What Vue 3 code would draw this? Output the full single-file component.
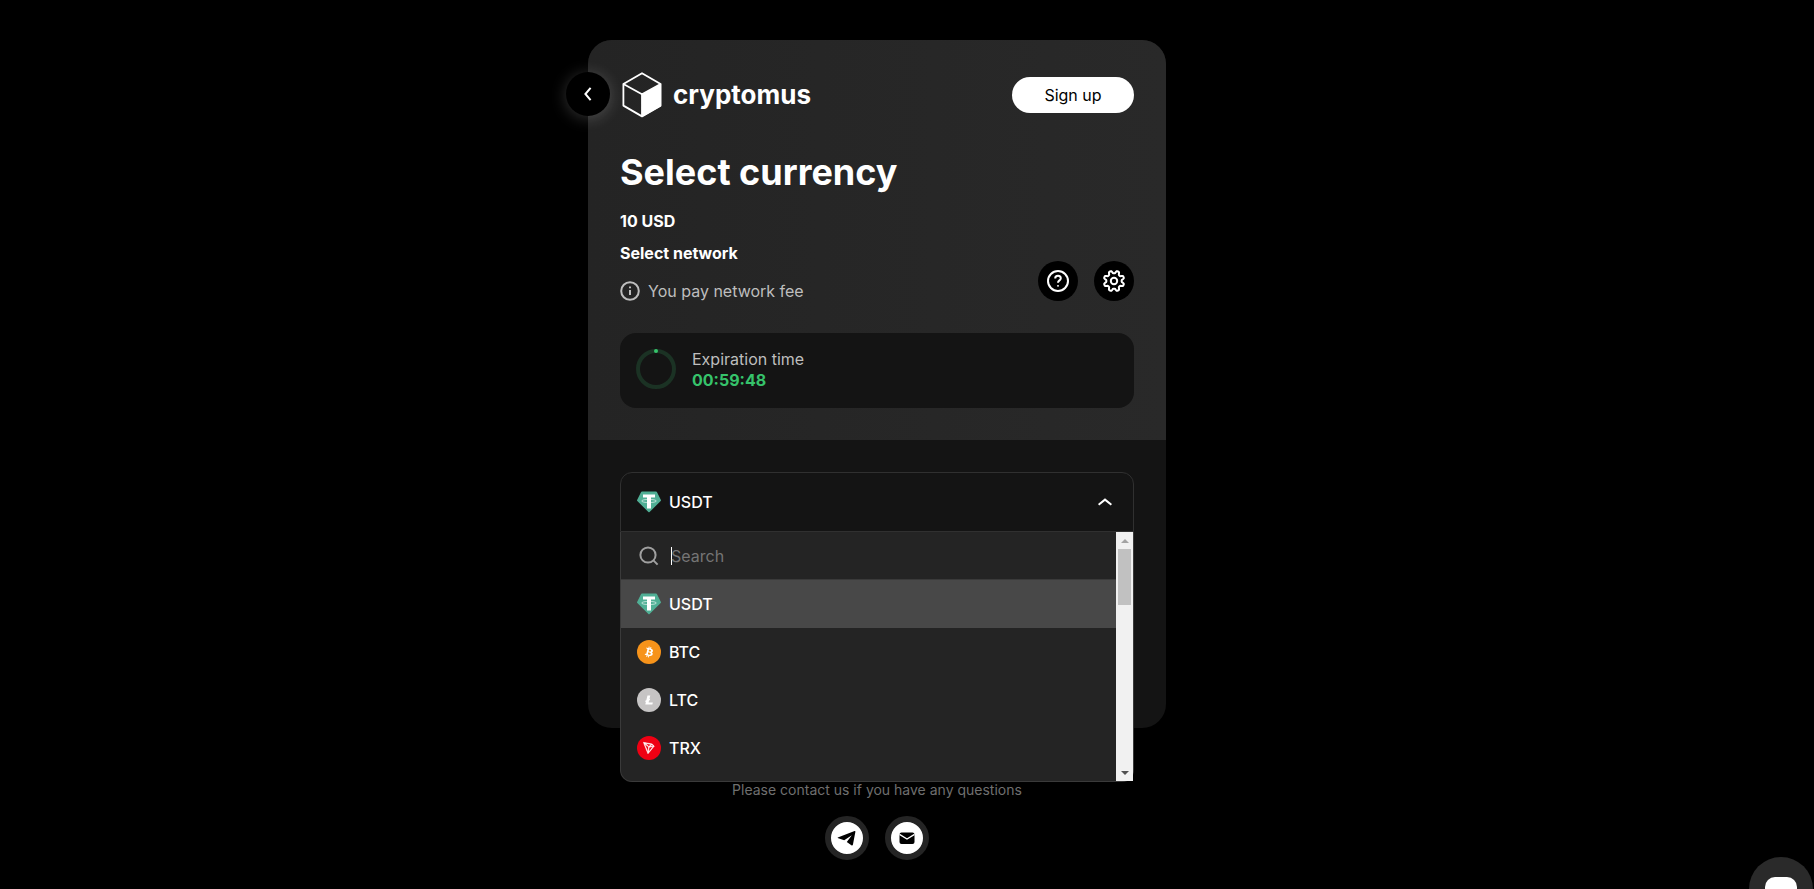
<template>
  <div class="page">
    <main class="checkout">
      <div class="card">
        <button class="back" type="button" aria-label="Back">
          <svg width="8" height="14" viewBox="0 0 8 14">
            <path d="M6.6 0.8 1.4 7l5.2 6.2" />
          </svg>
        </button>

        <section class="summary">
          <header class="header">
            <a class="logo" href="#">
              <svg width="40" height="46" viewBox="0 0 40 46">
                <path
                  class="logo-line"
                  d="M20 1.2 38.6 12v21.6L20 44.4 1.4 33.6V12zM1.4 12 20 22.2 38.6 12M20 22.2v22"
                />
                <path class="logo-face" d="M20 22.2 39 11.8v22.4L20 45z" />
              </svg>
              <span class="logo-name">cryptomus</span>
            </a>
            <button class="sign-up" type="button">Sign up</button>
          </header>

          <h1 class="title">Select currency</h1>

          <div class="details">
            <div class="info">
              <p class="amount">{{ amount }}</p>
              <p class="network">Select network</p>
              <p class="fee">
                <svg width="20" height="20" viewBox="0 0 20 20">
                  <circle cx="10" cy="10" r="8.8" />
                  <path d="M10 9v5" />
                  <path d="M10 5.6v1.6" />
                </svg>
                You pay network fee
              </p>
            </div>
            <div class="actions">
              <button class="round" type="button" aria-label="Help">
                <svg width="24" height="24" viewBox="0 0 24 24">
                  <circle cx="12" cy="12" r="10" />
                  <path d="M9.2 9.4c0-1.7 1.2-2.7 2.8-2.7s2.8 1 2.8 2.5c0 2.2-2.8 2.2-2.8 4.6" />
                  <path d="M12 16.2v1.4" />
                </svg>
              </button>
              <button class="round" type="button" aria-label="Settings">
                <svg width="24" height="24" viewBox="0 0 24 24">
                  <path :d="gearPath" />
                  <circle cx="12" cy="12" r="3.2" />
                </svg>
              </button>
            </div>
          </div>

          <div class="timer">
            <svg width="40" height="40" viewBox="0 0 40 40">
              <circle class="ring" cx="20" cy="20" r="18" />
              <circle class="ring-dot" cx="20" cy="2" r="2" />
            </svg>
            <div>
              <p class="timer-label">Expiration time</p>
              <p class="timer-value">{{ timeLeft }}</p>
            </div>
          </div>
        </section>

        <section class="payment">
          <div class="dropdown">
            <button
              class="dropdown-toggle"
              type="button"
              aria-haspopup="listbox"
              :aria-expanded="isOpen"
              @click="isOpen = !isOpen"
            >
              <CoinIcon :name="selected" />
              <span>{{ selected }}</span>
              <svg class="chevron" :class="{ closed: !isOpen }" width="14" height="8" viewBox="0 0 14 8">
                <path d="M.6 6.8 7 1.6l6.4 5.2" />
              </svg>
            </button>

            <div v-if="isOpen" class="menu">
              <div class="menu-list">
                <label class="search">
                  <svg width="20" height="20" viewBox="0 0 20 20">
                    <circle cx="9" cy="9" r="7.6" />
                    <path d="m14.4 14.4 4.2 4.2" />
                  </svg>
                  <span class="caret"></span>
                  <input v-model="query" type="text" placeholder="Search" aria-label="Search" />
                </label>
                <ul role="listbox" aria-label="Currency">
                  <li
                    v-for="coin in filteredCoins"
                    :key="coin"
                    class="option"
                    :class="{ active: coin === selected }"
                    role="option"
                    :aria-selected="coin === selected"
                    @click="selectCoin(coin)"
                  >
                    <CoinIcon :name="coin" />
                    <span>{{ coin }}</span>
                  </li>
                </ul>
              </div>
              <div class="scrollbar">
                <span class="arrow up"></span>
                <span class="thumb"></span>
                <span class="arrow down"></span>
              </div>
            </div>
          </div>
        </section>
      </div>

      <footer class="footer">
        <p>Please contact us if you have any questions</p>
        <div class="socials">
          <a class="social" href="#" aria-label="Telegram">
            <svg width="20" height="20" viewBox="0 0 20 20">
              <path d="M.8 9.6 17.6 3c.5-.2.9.1.8.7l-2.5 13c-.2.8-.8 1-1.5.6l-4.6-3.4 5-6.6-7.6 5-5.9-2c-.8-.2-.8-.5-.5-.7z" />
            </svg>
          </a>
          <a class="social" href="#" aria-label="E-mail">
            <svg width="20" height="20" viewBox="0 0 20 20">
              <rect x="2.5" y="4.5" width="15" height="11.5" rx="2" />
              <path class="cut" d="m2.5 6.4 7.5 4.6 7.5-4.6" />
            </svg>
          </a>
        </div>
      </footer>
    </main>

    <button class="chat" type="button" aria-label="Open chat">
      <svg width="32" height="28" viewBox="0 0 32 28">
        <rect width="32" height="26" rx="10" />
      </svg>
    </button>
  </div>
</template>

<script setup>
import { ref, computed, h } from "vue";

const amount = ref("10 USD");
const timeLeft = ref("00:59:48");
const coins = ["USDT", "BTC", "LTC", "TRX"];
const selected = ref("USDT");
const query = ref("");
const isOpen = ref(true);

const filteredCoins = computed(() =>
  coins.filter((coin) => coin.toLowerCase().includes(query.value.toLowerCase()))
);

const selectCoin = (coin) => {
  selected.value = coin;
  isOpen.value = false;
};

// Eight soft teeth around the centre of a 24px box
const gearPath = computed(() => {
  const points = [];
  for (let i = 0; i < 96; i++) {
    const angle = (i / 96) * Math.PI * 2;
    const wave = Math.tanh(2 * Math.cos(8 * angle + Math.PI));
    const radius = 9 + 1.4 * wave;
    const x = 12 + radius * Math.cos(angle);
    const y = 12 + radius * Math.sin(angle);
    points.push(`${x.toFixed(2)} ${y.toFixed(2)}`);
  }
  return `M${points.join("L")}z`;
});

const coinShapes = {
  USDT: () => [
    h("path", { fill: "#50af95", d: "M5 1.5h14a1 1 0 0 1 .9.5l4 8c.2.4.1.8-.2 1.1L12.6 22a.9.9 0 0 1-1.2 0L.3 11.1c-.3-.3-.4-.7-.2-1.1l4-8a1 1 0 0 1 .9-.5z" }),
    h("path", { fill: "#fff", d: "M6 4.5h12v3h-4v11h-4v-11H6z" }),
    h("ellipse", { cx: 12, cy: 11, rx: 7.4, ry: 1.6, fill: "none", stroke: "#fff", "stroke-width": 0.6 }),
  ],
  BTC: () => [
    h("circle", { cx: 12, cy: 12, r: 12, fill: "#f7931a" }),
    h("path", {
      fill: "#fff",
      transform: "translate(3.2 3.2) scale(.55)",
      d: "M23.189 14.02c.314-2.096-1.283-3.223-3.465-3.975l.708-2.84-1.728-.43-.69 2.765c-.454-.114-.92-.22-1.385-.326l.695-2.783L15.596 6l-.708 2.839c-.376-.086-.746-.17-1.104-.26l.002-.009-2.384-.595-.46 1.846s1.283.294 1.256.312c.7.175.826.638.805 1.006l-.806 3.235c.048.012.11.03.18.057l-.183-.045-1.13 4.532c-.086.212-.303.531-.793.41.018.025-1.256-.313-1.256-.313l-.858 1.978 2.25.561c.418.105.828.215 1.231.318l-.715 2.872 1.727.43.708-2.84c.472.127.93.245 1.378.357l-.706 2.828 1.728.43.715-2.866c2.948.558 5.164.333 6.097-2.333.752-2.146-.037-3.385-1.588-4.192 1.13-.26 1.98-1.003 2.207-2.538zm-3.95 5.538c-.533 2.147-4.148.986-5.32.695l.95-3.805c1.172.293 4.929.872 4.37 3.11zm.535-5.569c-.487 1.953-3.495.96-4.47.717l.86-3.45c.975.243 4.118.696 3.61 2.733z",
    }),
  ],
  LTC: () => [
    h("circle", { cx: 12, cy: 12, r: 12, fill: "#c6c4c4" }),
    h("path", {
      fill: "#fff",
      transform: "translate(3.2 3.2) scale(.55)",
      d: "M10.427 19.214 9 19.768l.688-2.759 1.444-.58L13.213 8h5.129l-1.519 6.196 1.41-.571-.68 2.75-1.427.571-.848 3.483H23L22.127 24H9.252z",
    }),
  ],
  TRX: () => [
    h("circle", { cx: 12, cy: 12, r: 12, fill: "#ef0013" }),
    h("path", {
      fill: "#fff",
      stroke: "#fff",
      "stroke-width": 0.9,
      transform: "translate(1.9 2) scale(.6)",
      d: "M21.932 9.913 7.5 7.257l7.595 19.112 10.583-12.894-3.746-3.562zm-.232 1.17 2.208 2.099-6.038 1.093 3.83-3.192zm-5.142 2.973-6.364-5.278 10.402 1.914-4.038 3.364zm-.453.934-1.038 8.58L9.472 9.487l6.633 5.502zm.96.455 6.687-1.21-7.67 9.343.983-8.133z",
    }),
  ],
};

const CoinIcon = (props) =>
  h("svg", { width: 24, height: 24, viewBox: "0 0 24 24" }, coinShapes[props.name]());
CoinIcon.props = ["name"];
</script>

<style>
body {
  margin: 0;
  background: #000;
}
</style>

<style scoped>
.page {
  padding: 40px 60px 28px 0;
  color: #fff;
  font-family: Inter, "Liberation Sans", sans-serif;
  font-size: 16px;
  line-height: 20px;
}

p,
h1,
ul {
  margin: 0;
  padding: 0;
}

button,
input {
  font: inherit;
  color: inherit;
  border: none;
  padding: 0;
}

button {
  cursor: pointer;
}

svg {
  display: block;
  flex: none;
  fill: none;
}

.checkout {
  max-width: 578px;
  margin: 0 auto;
}

.card {
  position: relative;
  border-radius: 24px;
  background: #141414;
}

.back {
  position: absolute;
  top: 32px;
  left: -22px;
  display: flex;
  align-items: center;
  justify-content: center;
  width: 44px;
  height: 44px;
  border-radius: 50%;
  background: #000;
  box-shadow: 0 2px 16px rgba(255, 255, 255, 0.2);
}

.back path {
  stroke: #fff;
  stroke-width: 2;
}

.summary {
  padding: 32px;
  border-radius: 24px 24px 0 0;
  background: linear-gradient(90deg, #242424, #292929);
}

.header {
  display: flex;
  align-items: center;
  justify-content: space-between;
}

.logo {
  display: flex;
  align-items: center;
  gap: 11px;
  padding-left: 2px;
  color: #fff;
  text-decoration: none;
}

.logo-line {
  stroke: #fff;
  stroke-width: 1.8;
  stroke-linejoin: round;
}

.logo-face {
  fill: #fff;
}

.logo-name {
  font-size: 26px;
  font-weight: 700;
  line-height: 32px;
}

.sign-up {
  width: 122px;
  height: 36px;
  border-radius: 18px;
  background: #fff;
  color: #000;
}

.title {
  margin-top: 32px;
  font-size: 36px;
  font-weight: 700;
  line-height: 44px;
}

.details {
  display: flex;
  align-items: flex-end;
  justify-content: space-between;
  margin-top: 17px;
}

.info {
  display: flex;
  flex-direction: column;
  gap: 12px;
}

.amount,
.network {
  font-weight: 700;
}

.fee {
  display: flex;
  align-items: center;
  gap: 8px;
  margin-top: 6px;
  color: #bebebe;
}

.fee svg {
  stroke: #bebebe;
  stroke-width: 2;
}

.actions {
  display: flex;
  gap: 16px;
}

.round {
  display: flex;
  align-items: center;
  justify-content: center;
  width: 40px;
  height: 40px;
  border-radius: 50%;
  background: #000;
}

.round svg {
  stroke: #fff;
  stroke-width: 2;
}

.timer {
  display: flex;
  gap: 16px;
  margin-top: 32px;
  padding: 16px 16px 17px;
  border-radius: 16px;
  background: #141414;
  line-height: 21px;
}

.ring {
  stroke: #1b3224;
  stroke-width: 4;
}

.ring-dot {
  fill: #36c36b;
}

.timer-label {
  color: #bebebe;
}

.timer-value {
  color: #36c36b;
  font-weight: 700;
}

.payment {
  min-height: 224px;
  padding: 32px;
}

.dropdown {
  position: relative;
}

.dropdown-toggle {
  display: flex;
  align-items: center;
  gap: 8px;
  box-sizing: border-box;
  width: 100%;
  height: 60px;
  padding: 0 21px 0 16px;
  border: 1px solid #303030;
  border-radius: 12px 12px 0 0;
  background: #141414;
  font-weight: 500;
}

.chevron {
  margin-left: auto;
  stroke: #fff;
  stroke-width: 2;
}

.chevron.closed {
  transform: rotate(180deg);
}

.menu {
  position: absolute;
  top: 100%;
  left: 0;
  right: 0;
  display: flex;
  height: 249px;
  border: 1px solid #3a3a3a;
  border-top: none;
  border-radius: 0 0 12px 12px;
  background: #242424;
}

.menu-list {
  flex: 1;
}

.search {
  display: flex;
  align-items: center;
  box-sizing: border-box;
  height: 48px;
  padding: 0 16px 0 18px;
  border-bottom: 1px solid #3a3a3a;
}

.search svg {
  stroke: #a0a0a0;
  stroke-width: 2;
}

.caret {
  width: 1px;
  height: 18px;
  margin-left: 12px;
  margin-right: -1px;
  background: #fff;
}

.search input {
  flex: 1;
  min-width: 0;
  background: transparent;
  outline: none;
}

.search input::placeholder {
  color: #757575;
  opacity: 1;
}

.option {
  display: flex;
  align-items: center;
  gap: 8px;
  height: 48px;
  padding: 0 16px;
  font-weight: 500;
  cursor: pointer;
}

.option.active {
  background: #484848;
}

.scrollbar {
  display: flex;
  flex-direction: column;
  align-items: center;
  width: 17px;
  background: #f1f1f1;
}

.arrow {
  border: 4px solid transparent;
  border-top-width: 0;
  border-bottom: 4px solid #a3a3a3;
  margin: 7px 0 6px;
}

.arrow.down {
  border-top: 4px solid #505050;
  border-bottom-width: 0;
  margin-top: auto;
}

.thumb {
  width: 13px;
  height: 56px;
  background: #c1c1c1;
}

.footer {
  display: flex;
  flex-direction: column;
  align-items: center;
  gap: 16px;
  padding-top: 52px;
  color: #6f6f6f;
  font-size: 14px;
}

.socials {
  display: flex;
  gap: 16px;
}

.social {
  display: flex;
  align-items: center;
  justify-content: center;
  width: 32px;
  height: 32px;
  border: 6px solid #242424;
  border-radius: 50%;
  background: #fff;
}

.social svg {
  fill: #000;
}

.social .cut {
  fill: none;
  stroke: #fff;
  stroke-width: 1.4;
}

.chat {
  position: fixed;
  right: 1px;
  bottom: -32px;
  display: flex;
  justify-content: center;
  width: 64px;
  height: 64px;
  padding-top: 20px;
  box-sizing: border-box;
  border-radius: 50%;
  background: #2a2a2a;
}

.chat svg {
  align-self: flex-start;
}

.chat rect {
  fill: #fff;
}
</style>
